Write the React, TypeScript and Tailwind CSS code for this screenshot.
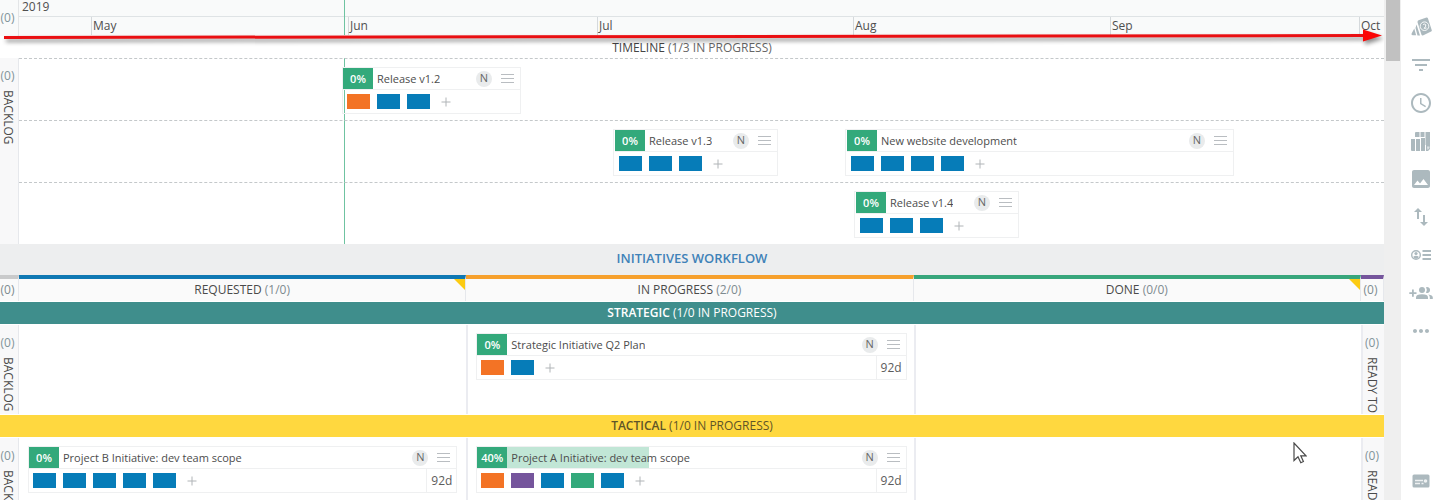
import type { ReactNode } from "react";
import {
  MdFilterList,
  MdImage,
  MdImportExport,
  MdMoreHoriz,
  MdSchedule,
} from "react-icons/md";

type Swatch = "blue" | "orange" | "purple" | "green";

const swatchClass: Record<Swatch, string> = {
  blue: "bg-[#067cb8]",
  orange: "bg-[#f37325]",
  purple: "bg-[#75559c]",
  green: "bg-[#33a97b]",
};

type CardProps = {
  title: string;
  percent: number;
  children: Swatch[];
  duration?: string;
  className?: string;
};

function Card({ title, percent, children, duration, className = "" }: CardProps) {
  return (
    <article className={`flex min-w-0 flex-col border border-[#eff0f1] ${className}`}>
      <header className="flex h-[22px] items-center border-b border-[#eff0f1]">
        <span className="flex h-[21px] w-[30px] shrink-0 items-center justify-center bg-[#33a97b] pt-px text-[11px] font-semibold text-white">
          {percent}%
        </span>
        <div className="relative flex h-full min-w-0 flex-1 items-center">
          <div className="absolute inset-y-0 left-0 bg-[#c1e6d6]" style={{ width: `${percent}%` }} hidden={percent === 0} />
          <h3 className="relative truncate pt-0.5 pl-1 text-[11px] text-[#4c4c4c]">{title}</h3>
        </div>
        <span className="flex size-4 shrink-0 items-center justify-center rounded-full bg-[#e9ebec] text-[11px] font-medium text-[#666]">
          N
        </span>
        <button type="button" aria-label="Card menu" className="mr-1.5 ml-[9px] flex w-[13px] shrink-0 flex-col gap-[3px]">
          <span className="h-px w-full bg-[#b9bdc1]" />
          <span className="h-px w-full bg-[#b9bdc1]" />
          <span className="h-px w-full bg-[#b9bdc1]" />
        </button>
      </header>
      <div className="flex h-[23px] items-center pl-1">
        <div className="flex flex-1 items-center gap-[7px]">
          {children.map((c, i) => (
            <span key={i} className={`h-[15px] w-[23px] ${swatchClass[c]}`} />
          ))}
          <button type="button" aria-label="Add" className="ml-1 text-[#b0b4b7]">
            <svg viewBox="0 0 10 10" className="size-[10px]" stroke="currentColor" strokeWidth="1">
              <path d="M5 .5v9M.5 5h9" />
            </svg>
          </button>
        </div>
        {duration && (
          <span className="flex h-full w-[30px] items-center justify-center border-l border-[#eff0f1] text-[12px] text-[#5c5c5c]">
            {duration}
          </span>
        )}
      </div>
    </article>
  );
}

function Collapsed({ name, className = "" }: { name: string; className?: string }) {
  return (
    <div className={`flex flex-col items-center gap-1.5 overflow-hidden bg-[#f8f8f9] pt-2.5 pr-[3px] ${className}`}>
      <span className="text-[12px] leading-4 text-[#82949a]">(0)</span>
      <span className="text-[12px] leading-4 whitespace-nowrap text-[#4a4a4a] [writing-mode:vertical-rl]">{name}</span>
    </div>
  );
}

type ColumnHeadProps = { name?: string; count: string; bar: string; flag?: boolean };

function ColumnHead({ name, count, bar, flag }: ColumnHeadProps) {
  return (
    <div className={`relative flex h-[26px] items-center justify-center border-t-4 border-r border-r-[#e6e8ec] bg-[#fafafa] text-[12px] whitespace-nowrap ${bar}`}>
      {name && <span className="font-medium text-[#4a4a4a]">{name}&nbsp;</span>}
      <span className={`text-[#7e8b90] ${name ? "" : "pr-[3px]"}`}>{count}</span>
      {flag && (
        <svg viewBox="0 0 11 11" className="absolute top-0 right-0 size-[11px]" fill="#fccb12">
          <path d="M0 0h11v11z" />
        </svg>
      )}
    </div>
  );
}

function Lane({ name, count, tone }: { name: string; count: string; tone: string }) {
  return (
    <div className={`my-px flex h-[22px] shrink-0 items-center justify-center text-[12px] ${tone}`}>
      <span className="font-semibold">{name}</span>&nbsp;{count}
    </div>
  );
}

const workflowCols = "grid grid-cols-[19px_1fr_1fr_1fr_23px]";

function LaneRow({ left, middle }: { left?: ReactNode; middle?: ReactNode }) {
  return (
    <div className={`${workflowCols} h-[89px] shrink-0`}>
      <Collapsed name="BACKLOG" className="border-r border-[#e6e8ec]" />
      <div className="pt-2 pr-[9px] pl-[9px]">{left}</div>
      <div className="border-l-2 border-[#ebecf1] pt-2 pr-[7px] pl-2">{middle}</div>
      <div className="border-l-2 border-[#ebecf1]" />
      <Collapsed name="READY TO ARCHIVE" className="border-l-2 border-[#ebecf1]" />
    </div>
  );
}

const months = ["", "May", "Jun", "Jul", "Aug", "Sep", "Oct"];

function Timeline() {
  return (
    <section className="relative shrink-0">
      <div className="flex h-9 bg-[#f9fafa]">
        <div className="flex w-[19px] shrink-0 items-center justify-center border-r border-[#e3e5e7] pr-[3px] text-[12px] text-[#82949a]">
          <span className="leading-8">(0)</span>
        </div>
        <div className="min-w-0 flex-1 text-[12px] font-medium text-[#4f4f4f]">
          <div className="flex h-[17px] items-center border-b border-[#dfe3e5] pb-0.5 pl-[3px] leading-3">2019</div>
          <div className="grid h-[18px] grid-cols-[72fr_257fr_249fr_256fr_257fr_249fr_25fr]">
            {months.map((m, i) => (
              <div key={i} className={`flex min-w-0 items-center pl-px leading-4 ${i > 0 ? "border-l border-[#d5d9dc]" : ""}`}>
                {m}
              </div>
            ))}
          </div>
        </div>
      </div>
      <div className="flex h-[22px] items-center justify-center pt-0.5 text-[12px] text-[#666]">
        <span className="font-medium text-[#444]">TIMELINE</span>&nbsp;(1/3 IN PROGRESS)
      </div>
      <div className="flex">
        <Collapsed name="BACKLOG" className="w-[19px] shrink-0 border-r border-[#e6e8ec]" />
        <div className="relative min-w-0 flex-1">
          <div className="grid h-[62px] grid-cols-[323fr_179fr_863fr] items-start border-t border-dashed border-[#c4c8ca] pt-2">
            <Card title="Release v1.2" percent={0} className="col-start-2">{["orange", "blue", "blue"]}</Card>
          </div>
          <div className="grid h-[62px] grid-cols-[594fr_165fr_67fr_389fr_150fr] items-start border-t border-dashed border-[#c4c8ca] pt-2">
            <Card title="Release v1.3" percent={0} className="col-start-2 pl-px">{["blue", "blue", "blue"]}</Card>
            <Card title="New website development" percent={0} className="col-start-4 pl-px">{["blue", "blue", "blue", "blue"]}</Card>
          </div>
          <div className="grid h-[62px] grid-cols-[835fr_165fr_365fr] items-start border-t border-dashed border-[#c4c8ca] pt-2">
            <Card title="Release v1.4" percent={0} className="col-start-2 pl-px">{["blue", "blue", "blue"]}</Card>
          </div>
          <div className="absolute inset-y-0 left-[23.8%] -z-10 w-px bg-[#6fc3a1]" />
        </div>
      </div>
      <div className="absolute top-0 right-0 left-[19px] h-[35px]">
        <div className="absolute inset-y-0 left-[23.8%] w-px bg-[#6fc3a1]" />
      </div>
      <svg viewBox="0 0 1384 20" preserveAspectRatio="none" className="absolute top-7 left-0 h-5 w-full drop-shadow-[2px_3px_2px_rgba(0,0,0,0.45)]" aria-hidden="true">
        <path d="M4 8 1364 6v3L4 11z" fill="#ea0f12" />
        <path d="M1363 1.500 1382 7.500 1363 13.500z" fill="#fb0505" />
      </svg>
    </section>
  );
}

function Workflow() {
  return (
    <section>
      <h2 className="flex h-[31px] items-center justify-center bg-[#edeeef] pb-0.5 text-[13px] font-semibold text-[#3f82b8]">
        INITIATIVES WORKFLOW
      </h2>
      <div className={workflowCols}>
        <ColumnHead count="(0)" bar="border-t-[#c9cacb]" />
        <ColumnHead name="REQUESTED" count="(1/0)" bar="border-t-[#0f78b3]" flag />
        <ColumnHead name="IN PROGRESS" count="(2/0)" bar="border-t-[#f6a02c]" />
        <ColumnHead name="DONE" count="(0/0)" bar="border-t-[#37a67b]" flag />
        <ColumnHead count="(0)" bar="border-t-[#75559c]" />
      </div>
      <Lane name="STRATEGIC" count="(1/0 IN PROGRESS)" tone="bg-[#3f8e8c] text-white font-medium" />
      <LaneRow
        middle={<Card title="Strategic Initiative Q2 Plan" percent={0} duration="92d">{["orange", "blue"]}</Card>}
      />
      <Lane name="TACTICAL" count="(1/0 IN PROGRESS)" tone="bg-[#ffd83f] text-[#5f5528]" />
      <LaneRow
        left={<Card title="Project B Initiative: dev team scope" percent={0} duration="92d">{["blue", "blue", "blue", "blue", "blue"]}</Card>}
        middle={
          <Card title="Project A Initiative: dev team scope" percent={40} duration="92d">
            {["orange", "purple", "blue", "green", "blue"]}
          </Card>
        }
      />
    </section>
  );
}

function ToolButton({ label, children }: { label: string; children: ReactNode }) {
  return (
    <button type="button" aria-label={label} className="flex h-[38px] w-full items-center justify-center">
      {children}
    </button>
  );
}

function Toolbar() {
  return (
    <nav className="flex w-[39px] shrink-0 flex-col pt-2 text-[#acb9be]">
      <ToolButton label="Planning cards">
        <svg viewBox="0 0 24 24" className="size-6" fill="currentColor">
          <path d="M9.500 5.200 17.500 2.500q1-.3 1.400.7l3.900 12q.3 1-.7 1.400l-8.200 3.900q-1 .3-1.400-.7l-4-12.500q-.1-1.500 1-2.100z" />
          <path d="M7.500 9.500 11 20.500H8.500L6.500 13zM5.300 13.500l1.800 6.700H3.600q-1.600-.2-1-1.800z" />
          <circle cx="15.500" cy="11.200" r="4.300" fill="none" stroke="#fff" strokeWidth=".9" />
          <path d="M14.200 9.500q1.800-1 2.500.2t-1.500 3.700l2.300-.4" fill="none" stroke="#fff" strokeWidth="1" />
        </svg>
      </ToolButton>
      <ToolButton label="Filter"><MdFilterList className="size-6" /></ToolButton>
      <ToolButton label="History"><MdSchedule className="size-6" /></ToolButton>
      <ToolButton label="Board layout">
        <svg viewBox="0 0 24 24" className="size-6" fill="currentColor">
          <path d="M2 10h4v12H3q-1 0-1-1zM7 10h4v12H7zM12 9h4v13h-4zM7 3h3.500v5H6V4q0-1 1-1zM11.500 3h4v5h-4zM16.500 3H21v17l-2 2h-2V16h-.5z" />
          <path d="M18 17.500h2.500v1.500L18.500 21z" fill="#dce2e4" />
        </svg>
      </ToolButton>
      <ToolButton label="Background"><MdImage className="size-6" /></ToolButton>
      <ToolButton label="Import and export"><MdImportExport className="size-6" /></ToolButton>
      <ToolButton label="Assignees">
        <svg viewBox="0 0 24 24" className="size-6" fill="none" stroke="currentColor">
          <circle cx="7" cy="12" r="4.300" strokeWidth="1.400" />
          <circle cx="7" cy="10.500" r="1.600" fill="currentColor" stroke="none" />
          <path d="M4 14q3-2.500 6 0-3 3.500-6 0z" fill="currentColor" stroke="none" />
          <path d="M13.500 8h8.500M13.500 12h8.500M13.500 16h8.500" strokeWidth="1.800" />
        </svg>
      </ToolButton>
      <ToolButton label="Invite people">
        <svg viewBox="0 0 24 24" className="size-6" fill="currentColor">
          <path d="M3 8.500h1.800v2.700h2.700V13H4.800v2.700H3V13H.3v-1.800H3z" />
          <circle cx="13" cy="9" r="3" />
          <path d="M7 18v-1.500q0-3.300 6-3.300t6 3.300V18z" />
          <path d="M17 6.200a3 3 0 1 1 0 5.600q1.800-2.800 0-5.600zM19.300 13.600q4.500.7 4.500 3V18h-3v-1.500q0-1.700-1.500-2.900z" />
        </svg>
      </ToolButton>
      <ToolButton label="More"><MdMoreHoriz className="size-6" /></ToolButton>
      <div className="mt-auto">
        <ToolButton label="Card details">
          <svg viewBox="0 0 24 24" className="size-6" fill="currentColor">
            <rect x="3.500" y="5.500" width="17" height="13" rx="1.500" />
            <path d="M6 11.500h8M6 14.500h5M12.500 14.500h2" stroke="#eef1f2" strokeWidth="1.300" />
            <circle cx="16.500" cy="12" r="1.800" fill="#eef1f2" />
          </svg>
        </ToolButton>
      </div>
    </nav>
  );
}

export default function App() {
  return (
    <div className="relative isolate flex h-screen overflow-hidden bg-white font-['Open_Sans','Noto_Sans',sans-serif]">
      <main className="relative z-0 flex min-w-0 flex-1 flex-col overflow-hidden">
        <Timeline />
        <Workflow />
      </main>
      <div className="w-[17px] shrink-0 bg-[#efefef] pl-0.5 pr-px" aria-hidden="true">
        <div className="h-[61px] bg-[#c1c1c1]" />
      </div>
      <Toolbar />
      <svg viewBox="0 0 14 22" className="absolute top-[442px] left-[1293px] h-[22px] w-[14px]" fill="#fff" stroke="#4a4a4a" strokeWidth="1.200" aria-hidden="true">
        <path d="M1 1v17.500l4-3.800 2.800 6 2.600-1.200-2.600-5.700H13z" />
      </svg>
    </div>
  );
}
